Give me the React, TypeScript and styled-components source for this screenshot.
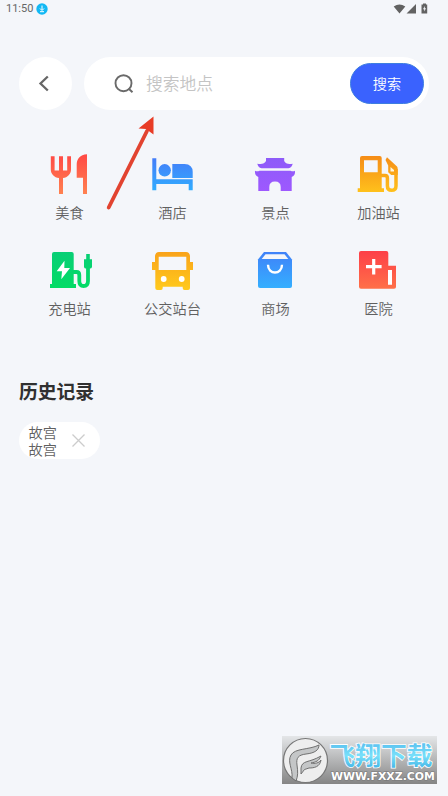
import React from "react";
import styled, { createGlobalStyle } from "styled-components";

const GlobalStyle = createGlobalStyle`
  * { box-sizing: border-box; }
  body { margin: 0; background: #f4f6fa; }
  button { border: 0; padding: 0; font: inherit; }
`;

const Screen = styled.main`
  position: relative;
  width: 448px;
  height: 796px;
  overflow: hidden;
  background: #f4f6fa;
  font-family: "Noto Sans CJK SC", sans-serif;
  font-weight: 350;
  color: #606060;
`;

const StatusBar = styled.div`
  height: 18px;
  padding: 0 20px 0 6px;
  display: flex;
  align-items: center;
  justify-content: space-between;
  font: 11px/18px Roboto, sans-serif;
  color: #666;
`;

const StatusSide = styled.div`
  display: flex;
  align-items: center;
  gap: 3px;
  svg { display: block; }
`;

const Header = styled.header`
  margin-top: 39px;
  padding: 0 19px;
  display: flex;
  gap: 12px;
`;

const BackButton = styled.button`
  width: 53px;
  height: 53px;
  border-radius: 50%;
  background: #fff;
  svg { display: block; }
`;

const SearchBar = styled.div`
  flex: 1;
  height: 53px;
  padding: 0 5px 0 29px;
  display: flex;
  align-items: center;
  border-radius: 27px;
  background: #fff;
`;

const Placeholder = styled.span`
  flex: 1;
  margin: -1px 0 0 11px;
  font-size: 16.8px;
  line-height: 24px;
  color: #c4c4c4;
`;

const SearchButton = styled.button`
  width: 74px;
  height: 41px;
  padding-bottom: 2px;
  border: 1px solid #3d7ee0;
  border-radius: 21px;
  background: #3a62fe;
  color: #fff;
  font-size: 14.2px;
`;

const Categories = styled.section`
  margin: 42px 18px 0;
  display: grid;
  grid-template-columns: repeat(4, 103px);
  grid-auto-rows: 96px;
`;

const Category = styled.div`
  display: flex;
  flex-direction: column;
  align-items: center;
  svg { display: block; flex: none; }
`;

const Label = styled.span`
  margin-top: 5px;
  font-size: 14.2px;
  line-height: 22px;
  white-space: nowrap;
`;

const Title = styled.h2`
  margin: 33px 19px 0;
  font-size: 18.8px;
  line-height: 28px;
  font-weight: 700;
  color: #303030;
`;

const HistoryChip = styled.div`
  width: 81px;
  height: 37px;
  margin: 17px 0 0 19px;
  padding: 0 14px 0 9.5px;
  display: flex;
  align-items: center;
  justify-content: space-between;
  border-radius: 19px;
  background: #fff;
  font-size: 14.2px;
  line-height: 16.7px;
`;

const ArrowOverlay = styled.svg`
  position: absolute;
  left: 95px;
  top: 110px;
`;

const Watermark = styled.svg`
  position: absolute;
  left: 282px;
  top: 736px;
`;

type GlyphProps = { id: string; from: string; to: string; children: React.ReactNode };

const Glyph = ({ id, from, to, children }: GlyphProps) => (
  <svg width="45" height="44" viewBox="0 0 45 44" fill={`url(#${id})`}>
    <defs>
      <linearGradient id={id} gradientUnits="userSpaceOnUse" x1="0" y1="3" x2="0" y2="41">
        <stop offset="0" stopColor={from} />
        <stop offset="1" stopColor={to} />
      </linearGradient>
    </defs>
    {children}
  </svg>
);

const categories = [
  {
    name: "美食",
    icon: (
      <Glyph id="food" from="#ff4a45" to="#ff8050">
        <path d="M3.8 4.3H7.6V18.5H12V4.3H16V18.5H20.2V4.3H24V17.5C24 22 20.5 25.6 16 26V42H12V26C7.300 25.600 3.800 22 3.800 17.500Z" />
        <path d="M40 2.300V42H36V25.800H29.700V13C29.700 7 33 2.700 40 2.300Z" />
      </Glyph>
    ),
  },
  {
    name: "酒店",
    icon: (
      <Glyph id="hotel" from="#4678f8" to="#2fb0ff">
        <path d="M2.300 6.300H6.300V27.300H42.700V38.300H38.700V32H6.300V38.300H2.300Z" />
        <circle cx="14.700" cy="18.300" r="6.200" />
        <path d="M22.300 12H34.500Q42.700 12.300 42.700 20V26H22.300Z" />
      </Glyph>
    ),
  },
  {
    name: "景点",
    icon: (
      <Glyph id="sight" from="#8c5cf8" to="#9f58ff">
        <path d="M13 6H31.200V9Q33 13 39.700 11.700Q39 15.200 35.500 16.300H8.500Q5 15.200 4.300 11.700Q11 13 13 9Z" />
        <path d="M2 18.700Q4 20 6.500 18.700H37.500Q40 20 42 18.700Q42.500 23.500 38.700 25V39H27.700V35Q27.700 29.500 22 29.500Q16.300 29.500 16.300 35V39H5.300V25Q1.500 23.500 2 18.700Z" />
      </Glyph>
    ),
  },
  {
    name: "加油站",
    icon: (
      <Glyph id="fuel" from="#f58b16" to="#ffc21c">
        <path fillRule="evenodd" d="M6 4H23.700Q25.700 4 25.700 6V36.300H28V40H1.700V36.300H4V6Q4 4 6 4ZM8 8.300V20.300H21.700V8.300Z" />
        <path d="M25 23.500H29Q31.400 23.500 31.400 26V34Q31.400 38.300 35.500 38.300Q40 38.300 40 34V17" fill="none" stroke="url(#fuel)" strokeWidth="3.500" />
        <path d="M31 5.300L41 14.500Q41.700 15.300 41.700 17V23H35.200L32.200 20.300V13.500L29.500 8Z" />
        <path d="M34.500 15V19.500H38V18Z" fill="#fff6df" />
      </Glyph>
    ),
  },
  {
    name: "充电站",
    icon: (
      <Glyph id="charge" from="#08ce76" to="#03dc65">
        <path d="M7 4H24.700Q26.700 4 26.700 6V36H29V40H3V36H5V6Q5 4 7 4Z" />
        <path d="M17.500 12.700L9.700 23.300H15L14.300 31.300L23 20H17.300Z" fill="#fff" />
        <path d="M26 24H29.500Q32.300 24 32.300 27V33Q32.300 38 36.600 38Q41 38 41 33V20" fill="none" stroke="url(#charge)" strokeWidth="3.800" />
        <path d="M39.200 6H42.800V11.300H45V19Q44.500 20.500 43 20.500H39Q37.300 20.500 37 19V11.300H39.200Z" />
      </Glyph>
    ),
  },
  {
    name: "公交站台",
    icon: (
      <Glyph id="bus" from="#f9a21a" to="#ffc91c">
        <path fillRule="evenodd" d="M9 4H36Q39.500 4 40 8V14H43V22H40V40Q40 42 38 42H34.500Q32.700 42 32.700 40V38.700H12.700V40Q12.700 42 11 42H7.300Q5.300 42 5.300 40V22H2V14H5V8Q5.500 4 9 4ZM8.700 8.700V22H36.300V8.700Z" />
        <circle cx="13.700" cy="31" r="2.900" fill="#fff" />
        <circle cx="31.700" cy="31" r="2.900" fill="#fff" />
      </Glyph>
    ),
  },
  {
    name: "商场",
    icon: (
      <Glyph id="mall" from="#4080f8" to="#34b0ff">
        <path d="M11 4H33L39 11.500V38Q39 40 37 40H7Q5 40 5 38V11.500Z" />
        <path d="M12.500 6.300H31.500L35.300 10.900H8.700Z" fill="#f4f6fa" />
        <path d="M15 16.800C15 27 29 27 29 16.800" fill="none" stroke="#fff" strokeWidth="2.400" />
      </Glyph>
    ),
  },
  {
    name: "医院",
    icon: (
      <Glyph id="hospital" from="#fd3f48" to="#ff7048">
        <path d="M5 3H30.300Q32.300 3 32.300 5V17.700H40V39Q40 40.700 38 40.700H5Q3 40.700 3 38.700V5Q3 3 5 3Z" />
        <path d="M10 17.100H16.100V11H19.300V17.100H25.600V20.300H19.300V26.600H16.100V20.300H10ZM32 22H36V36.700H32Z" fill="#fff" />
      </Glyph>
    ),
  },
];

const SiteMark = () => (
  <Watermark width="155" height="48" viewBox="0 0 155 48">
    <defs>
      <linearGradient id="plate" x1="0" y1="0" x2="0" y2="1">
        <stop offset="0" stopColor="#e4e6e8" />
        <stop offset="1" stopColor="#858585" />
      </linearGradient>
      <linearGradient id="brand" x1="0" y1="0" x2="0" y2="1">
        <stop offset="0.200" stopColor="#5cc2f0" />
        <stop offset="0.550" stopColor="#79e0fa" />
        <stop offset="1" stopColor="#35a9e2" />
      </linearGradient>
    </defs>
    <rect width="155" height="48" fill="url(#plate)" />
    <circle cx="23.500" cy="24.500" r="22" fill="#eee" stroke="#777" strokeWidth="1.200" />
    <path d="M10 42C11 33 5 26 9 19C13 12 27 14 37 9C37 14 33 17 24 18C16 19 14 22 15 29C16 36 16 40 14 45Z" fill="#c4c6c7" stroke="#707070" />
    <path d="M19 32C20 24 27 27 39 20C37 25 34 26 29 27C33 28 37 27 39 24C38 31 32 32 27 32Q22 32 19 38Z" fill="#c4c6c7" stroke="#707070" />
    <text x="47.500" y="29" textLength="103" lengthAdjust="spacingAndGlyphs" fontFamily="Noto Sans CJK SC, sans-serif" fontWeight="700" fontSize="25" fill="url(#brand)" stroke="#fff" strokeWidth="1.600" paintOrder="stroke">飞翔下载</text>
    <text x="49" y="44" textLength="104" lengthAdjust="spacingAndGlyphs" fontFamily="DejaVu Sans, sans-serif" fontWeight="700" fontSize="10" fill="#fff" stroke="#777" strokeWidth="1" paintOrder="stroke">WWW.FXXZ.COM</text>
  </Watermark>
);

export default function App() {
  return (
    <>
      <GlobalStyle />
      <Screen>
        <StatusBar>
          <StatusSide>
            <span>11:50</span>
            <svg width="12" height="12" viewBox="0 0 12 12">
              <circle cx="6" cy="6" r="5.700" fill="#12b8f4" />
              <path d="M6 2.500V7M4 5.500L6 7.500L8 5.500M4 8.700H8" fill="none" stroke="#fff" />
            </svg>
          </StatusSide>
          <svg width="35" height="12" viewBox="0 0 35 12" fill="#626262">
            <path d="M.7 3.500Q6.500-.6 12.300 3.500L6.500 10.500ZM23 1V10.500H13.500ZM29 1.500H30V.5H33V1.500H34.200V10.500H28.500V1.500Z" />
            <path d="M31.800 3L30 6.200H31.200V8.500L33 5.300H31.800Z" fill="#f4f6fa" />
          </svg>
        </StatusBar>
        <Header>
          <BackButton aria-label="返回">
            <svg width="53" height="53" viewBox="0 0 53 53">
              <path d="M28.800 19.500L21.500 26.500L28.800 33.500" fill="none" stroke="#666" strokeWidth="2.300" />
            </svg>
          </BackButton>
          <SearchBar>
            <svg width="22" height="22" viewBox="0 0 22 22" fill="none" stroke="#6a6a6a" strokeWidth="1.900">
              <circle cx="10.500" cy="10.200" r="8" />
              <path d="M15.500 15.500L19.500 19.300" />
            </svg>
            <Placeholder>搜索地点</Placeholder>
            <SearchButton>搜索</SearchButton>
          </SearchBar>
        </Header>
        <Categories>
          {categories.map(({ name, icon }) => (
            <Category key={name}>
              {icon}
              <Label>{name}</Label>
            </Category>
          ))}
        </Categories>
        <Title>历史记录</Title>
        <HistoryChip>
          <span>故宫<br />故宫</span>
          <svg width="15" height="15" viewBox="0 0 15 15">
            <path d="M1.500 1.500L13.500 13.500M13.500 1.500L1.500 13.500" stroke="#ccc" strokeWidth="1.300" />
          </svg>
        </HistoryChip>
        <ArrowOverlay width="70" height="105" viewBox="0 0 70 105">
          <path d="M13.700 97.500L52 21" stroke="#e24330" strokeWidth="3.800" strokeLinecap="round" />
          <path d="M58.500 6.500L43.500 18.500L51 19L58.500 24.500Z" fill="#e83c26" />
        </ArrowOverlay>
        <SiteMark />
      </Screen>
    </>
  );
}
